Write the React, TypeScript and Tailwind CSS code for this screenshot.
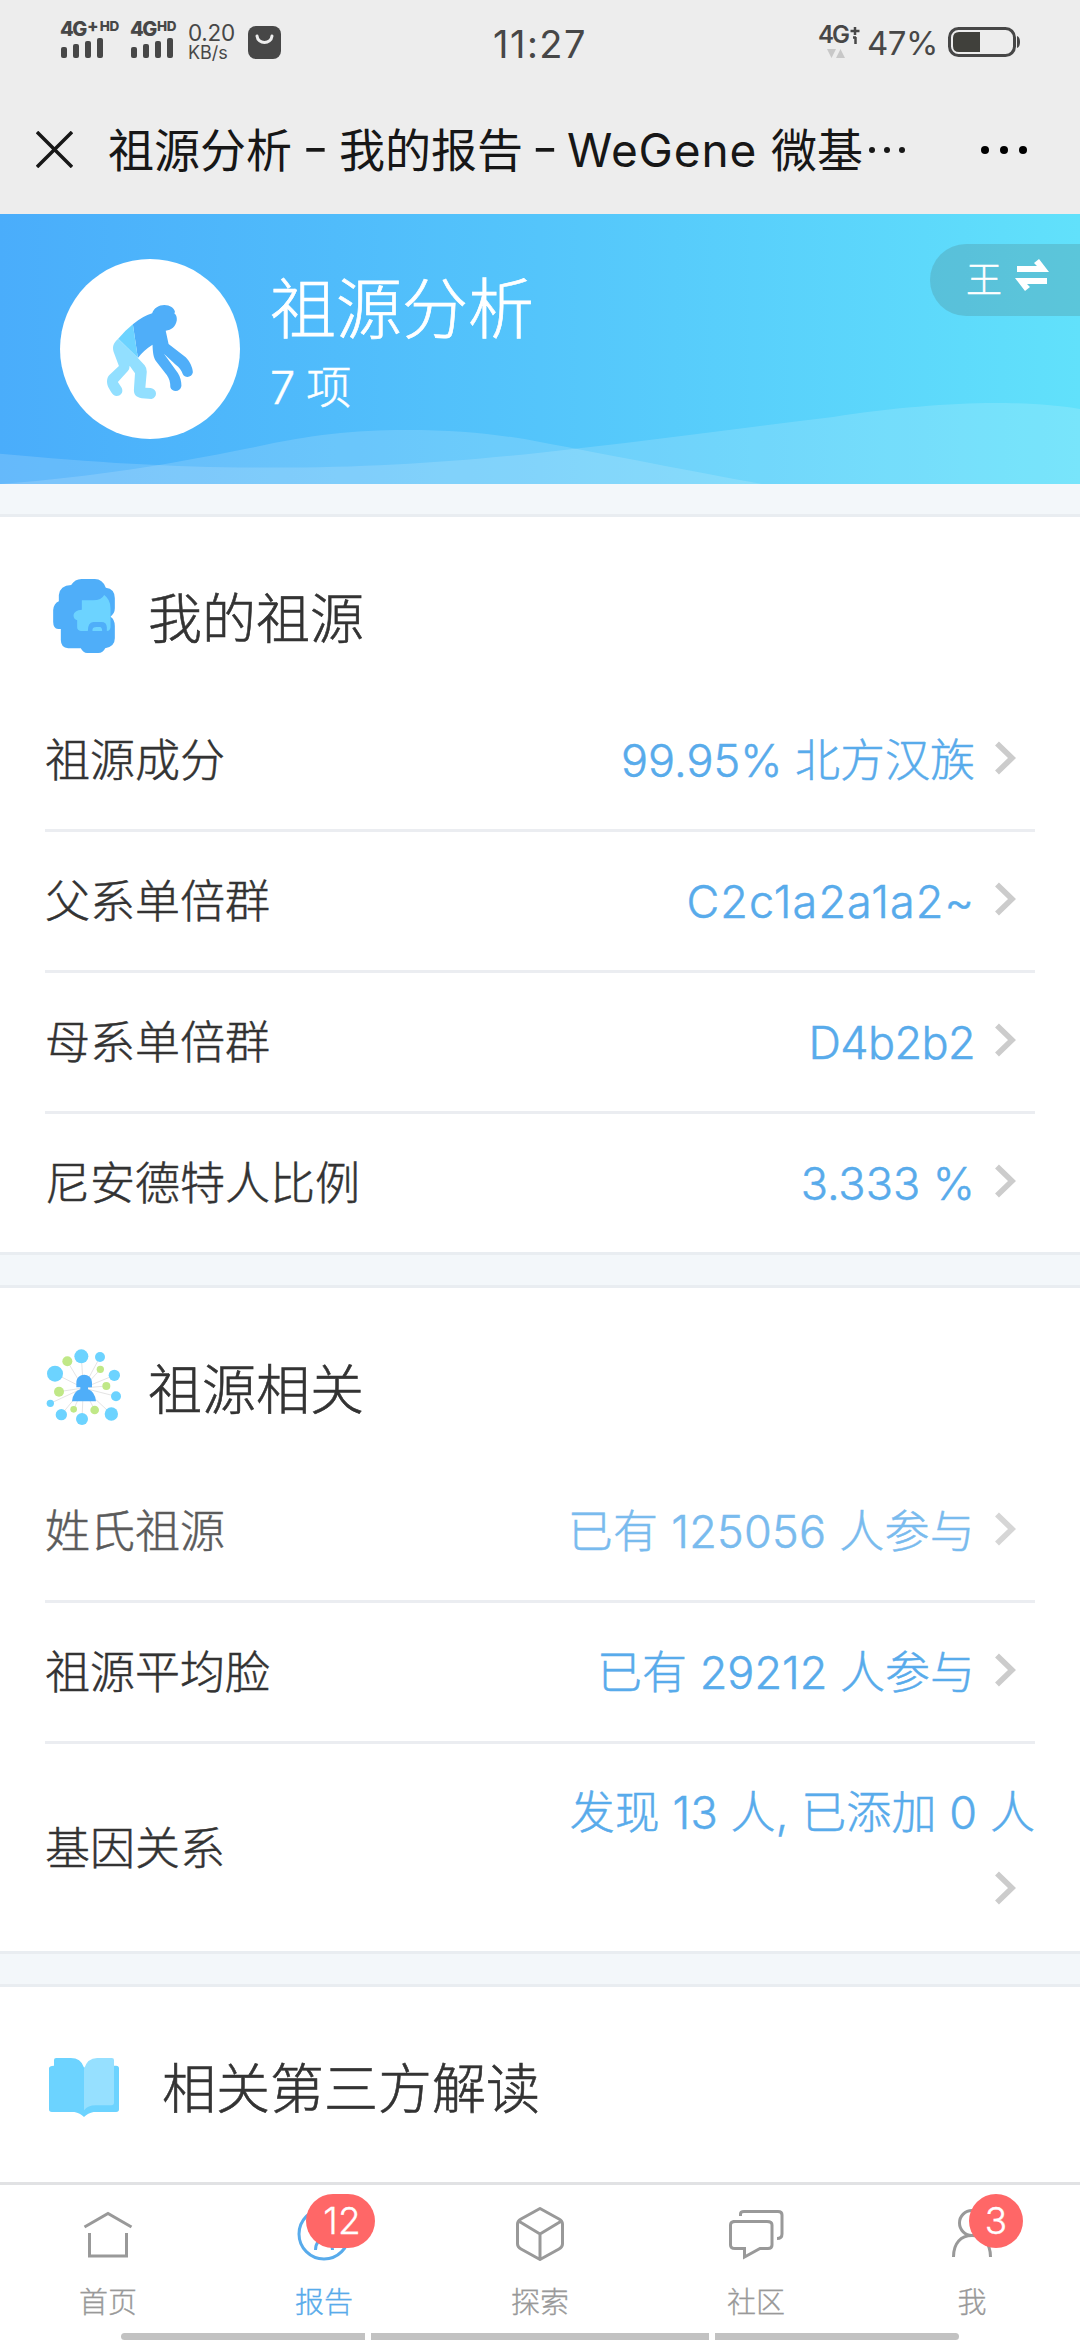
import type { ReactNode } from "react";

function Signal({ label, plus }: { label: string; plus?: boolean }) {
  return (
    <div className="flex h-[36px] flex-col justify-between">
      <div className="flex items-start font-extrabold leading-none">
        <span className="text-[20px] leading-[17px] tracking-[-1.4px]">4G</span>
        {plus && <span className="ml-[1px] text-[17px] leading-[11px]">+</span>}
        <span className="ml-[1px] text-[13.5px] leading-[11px] tracking-[-0.3px]">{label}</span>
      </div>
      <div className="ml-[1px] flex items-end gap-[6px]">
        <i className="h-[11px] w-[6px] rounded-[2px] bg-[#474747]" />
        <i className="h-[14px] w-[6px] rounded-[2px] bg-[#474747]" />
        <i className="h-[17px] w-[6px] rounded-[2px] bg-[#474747]" />
        <i className="h-[20px] w-[6px] rounded-[2px] bg-[#474747]" />
      </div>
    </div>
  );
}

function StatusBar() {
  return (
    <div className="relative flex h-[86px] items-start pl-[60px] pr-[60px] text-[#474747]">
      <div className="mt-[21px] w-[70px]">
        <Signal label="HD" plus />
      </div>
      <div className="mt-[21px] w-[58px]">
        <Signal label="HD" />
      </div>
      <div className="mt-[23px] flex w-[60px] flex-col">
        <span className="text-[22.5px] leading-[20px] tracking-[-0.3px]">0.20</span>
        <span className="text-[18px] leading-[20px]">KB/s</span>
      </div>
      <svg className="mt-[26px]" width="33" height="33" viewBox="0 0 33 33">
        <rect width="33" height="33" rx="8" fill="#474747" />
        <path d="M9 10 C10 18.500 23 18.500 24 10" fill="none" stroke="#ededed" strokeWidth="3" strokeLinecap="round" />
      </svg>
      <span className="absolute left-[493px] top-[24px] text-[38px] leading-[40px] tracking-[1.5px]">11:27</span>
      <div className="ml-auto mt-[26px] flex w-[49px] flex-col">
        <div className="flex items-start font-semibold">
          <span className="text-[24px] leading-[18px] tracking-[-2px]">4G</span>
          <svg className="ml-[2px]" width="10" height="18" viewBox="0 0 10 18">
            <path d="M5 1 V9 M0.500 5 H9.500 M5.500 11 V18 M3 11.500 H6" stroke="#474747" strokeWidth="2.500" fill="none" />
          </svg>
        </div>
        <svg className="ml-[9px] mt-[5px]" width="18" height="9" viewBox="0 0 18 9">
          <path d="M0 0 H9 L4.500 9Z M9 9 L13.500 0 L18 9Z" fill="#c8c8c8" />
        </svg>
      </div>
      <span className="mt-[24px] w-[81px] whitespace-nowrap text-[33px] leading-[38px] tracking-[-0.5px]">47%</span>
      <svg className="mt-[27px]" width="72" height="30" viewBox="0 0 72 30">
        <rect x="1.500" y="1.500" width="65" height="27" rx="9" fill="none" stroke="#474747" strokeWidth="3" />
        <path d="M32 5 V25 H11 Q5 25 5 19 V11 Q5 5 11 5Z" fill="#40403b" />
        <path d="M69 9 Q72 10 72 15 Q72 20 69 21Z" fill="#474747" />
      </svg>
    </div>
  );
}

function TitleBar() {
  return (
    <div className="flex h-[128px] items-center pl-[36px] pr-[53px] text-[#171717]">
      <svg className="mt-[-1px]" width="37" height="37" viewBox="0 0 37 37">
        <path d="M1 1 L36 36 M36 1 L1 36" stroke="#171717" strokeWidth="3.500" />
      </svg>
      <div className="ml-[35px] mt-[-1px] flex items-center whitespace-nowrap text-[46px] leading-[60px]">
        <span>祖源分析</span>
        <span className="mb-[5px] w-[47px] scale-x-125 text-center">-</span>
        <span>我的报告</span>
        <span className="mb-[5px] w-[44px] scale-x-125 text-center">-</span>
        <span className="w-[204px] tracking-[0.9px]">WeGene</span>
        <span>微基</span>
      </div>
      <div className="ml-[6px] flex gap-[9px]">
        <i className="h-[6px] w-[6px] rounded-full bg-[#171717]" />
        <i className="h-[6px] w-[6px] rounded-full bg-[#171717]" />
        <i className="h-[6px] w-[6px] rounded-full bg-[#171717]" />
      </div>
      <div className="ml-auto flex gap-[11px]">
        <i className="h-[8px] w-[8px] rounded-full bg-black" />
        <i className="h-[8px] w-[8px] rounded-full bg-black" />
        <i className="h-[8px] w-[8px] rounded-full bg-black" />
      </div>
    </div>
  );
}

function ApeIcon() {
  return (
    <svg className="overflow-visible" width="100" height="100" viewBox="280 267 280 300" preserveAspectRatio="none">
      <path d="M372 343 Q400 318 426 310 C431 294 445 285 460 285 C476 285 488 294 490 306 L488 310 Q496 316 495 331 C492 351 480 360 464 362 L472 402 L520 442 C532 455 540 475 540 487 C538 503 518 505 512 493 C508 480 502 472 492 464 L459 431 L498 489 C505 501 508 515 508 528 C505 547 482 548 477 532 C477 516 474 506 467 495 L437 454 C429 442 428 425 427 404 C410 415 396 430 386 444 Z" fill="#4faef9" />
      <path d="M331 386 Q350 362 372 343 L386 444 Z" fill="#6cd3ff" />
      <path d="M331 386 L386 444 L405 466 Q411 474 411 485 L407 533 L422 534 C441 537 442 563 424 567 L397 565 C380 562 374 552 375 538 L378 490 L363 467 Q363 477 358 483 L330 516 L341 534 C347 549 335 559 326 558 C316 557 312 548 303 531 C297 514 299 500 310 491 L333 468 L318 425 C314 408 318 398 331 386Z" fill="#92dfff" />
    </svg>
  );
}

function Hero() {
  return (
    <div className="relative h-[270px] bg-gradient-to-r from-[#4aadfb] via-[#54c5fb] to-[#61e1fb]">
      <svg className="absolute inset-0" width="1080" height="270" viewBox="0 0 1080 270">
        <path d="M0 270 C100 262 160 252 250 234 C310 221 350 216 407 216 C460 216 505 221 540 228 C600 239 700 259 762 270Z" fill="#fff" fillOpacity="0.15" />
        <path d="M0 239.700 C100 249 180 253.600 271 253.600 C370 253.600 450 248 540 238.700 C640 228 740 214 833 203 C890 194 950 189 994 189 C1030 189 1055 191 1080 195 V270 H0Z" fill="#fff" fillOpacity="0.15" />
      </svg>
      <div className="relative flex">
        <div className="ml-[60px] mt-[45px] flex h-[180px] w-[180px] items-center justify-center rounded-full bg-white">
          <ApeIcon />
        </div>
        <div className="ml-[30px] mt-[55px] text-white">
          <h1 className="text-[66px] font-light leading-[80px] [-webkit-text-stroke:0.7px]">祖源分析</h1>
          <p className="mt-[9px] text-[45px] font-light leading-[60px] tracking-[-0.8px] [-webkit-text-stroke:0.5px]">7 项</p>
        </div>
        <div className="ml-auto mt-[30px] flex h-[72px] w-[150px] items-start rounded-l-full bg-[#4d7f80]/27 pl-[36px] text-white">
          <span className="mt-[16px] text-[36px] font-light leading-[40px] [-webkit-text-stroke:0.4px]">王</span>
          <svg className="ml-[13px] mt-[15px]" width="34" height="32" viewBox="0 0 34 32">
            <path d="M2 7 H22 L19 4 L24 0 L34 13 H2Z M32 25 H12 L15 28 L10 32 L0 19 H32Z" fill="#fff" />
          </svg>
        </div>
      </div>
    </div>
  );
}

function Chevron() {
  return (
    <svg width="21" height="34" viewBox="0 0 21 34">
      <path d="M2 2.500 L17 17 L2 31.500" fill="none" stroke="#ccc" strokeWidth="5.600" />
    </svg>
  );
}

function CavemanIcon() {
  return (
    <svg width="62" height="74" viewBox="160 117 185 222">
      <path d="M214 135 Q225 117 245 117 H285 Q308 117 318 143 Q345 146 345 175 V205 Q345 220 332 230 Q345 238 345 258 V295 Q345 320 316 325 Q310 339 295 339 H262 Q250 339 243 325 H205 Q183 323 183 300 V267 H175 Q160 265 160 245 V210 Q162 190 177 184 V165 Q180 137 214 135Z" fill="#4faef9" />
      <path d="M246 181 H280 Q305 181 313 165 Q332 178 332 205 V262 Q331 273 321 273 V262 Q320 246 305 246 H280 Q264 248 264 273 H243 Q232 272 232 262 V241 Q221 238 221 225 Q223 211 246 209 Z M278 273 V268 Q280 261 290 261 H300 Q307 262 307 273Z" fill="#6cd3ff" />
    </svg>
  );
}

const blueNodes = [
  [244, 347, 21], [300, 349, 15], [165, 399, 24], [343, 404, 17], [348, 467, 15],
  [151, 488, 11], [184, 522, 17], [246, 535, 18], [334, 520, 20],
];
const greenNodes = [
  [202, 362, 15], [301, 386, 11], [319, 436, 12], [177, 453, 15], [221, 506, 10], [284, 508, 13],
];

function NetworkIcon() {
  return (
    <svg width="78" height="78" viewBox="135 322 234 234">
      {[...blueNodes, ...greenNodes].map(([x, y]) => (
        <line key={`${x}-${y}`} x1={x} y1={y} x2="250" y2="442" stroke="#dedede" strokeWidth="2.500" />
      ))}
      {blueNodes.map(([x, y, r]) => (
        <circle key={`${x}-${y}`} cx={x} cy={y} r={r} fill="#6cd3ff" />
      ))}
      {greenNodes.map(([x, y, r]) => (
        <circle key={`${x}-${y}`} cx={x} cy={y} r={r} fill="#c0e887" />
      ))}
      <path d="M229 440 V426 C229 394 276 394 276 426 V440 H264 V446 Q285 453 288 482 H216 Q219 453 241 446 V440Z" fill="#4faef9" />
    </svg>
  );
}

function BookIcon() {
  return (
    <svg width="70" height="59" viewBox="137 352 196 176" preserveAspectRatio="none">
      <path d="M151 375 V358 Q151 352 157 352 H198 Q226 352 235 380 H319 V375 H325 Q333 375 333 383 V505 Q333 513 325 513 H262 Q246 516 235 528 Q224 516 208 513 H145 Q137 513 137 505 V383 Q137 375 151 375Z" fill="#6cd3ff" />
      <path d="M235 508 V385 Q244 352 272 352 H313 Q319 352 319 358 V485 Q319 493 312 493 H268 Q246 493 235 508Z" fill="#96e0ff" />
    </svg>
  );
}

function Heading({ icon, wide, children }: { icon: ReactNode; wide?: boolean; children: ReactNode }) {
  return (
    <div className="flex h-[174px] items-center pl-[45px] pt-[24px]">
      <div className={wide ? "flex w-[117px] pl-[4px] pt-[2px]" : "flex w-[103px]"}>{icon}</div>
      <h2 className="mt-[7px] text-[54px] font-light leading-[70px] text-[#333] [-webkit-text-stroke:0.6px]">{children}</h2>
    </div>
  );
}

type Item = { label: string; value: string; tracking?: string; pressed?: boolean; tall?: boolean };

function Rows({ items }: { items: Item[] }) {
  return (
    <ul className="px-[45px]">
      {items.map((item, i) => (
        <li key={item.label} className={i < items.length - 1 ? "border-b-[3px] border-[#ebedf1]" : ""}>
          <div
            className={
              "flex items-center justify-between text-[45px] font-light [-webkit-text-stroke:0.5px] " +
              (item.tall ? "h-[207px] " : "h-[138px] ") +
              (item.pressed ? "opacity-80" : "")
            }
          >
            <span className="pt-[2px] text-[#333]">{item.label}</span>
            {item.tall ? (
              <span className="flex flex-col items-end whitespace-nowrap pt-[11px] text-[#58abeb]">
                <span className="leading-[70px] tracking-[0.1px]">{item.value}</span>
                <span className="mr-[19px] flex h-[80px] items-center">
                  <Chevron />
                </span>
              </span>
            ) : (
              <span className="mr-[19px] flex items-center whitespace-nowrap text-[#58abeb]">
                <span className={"pt-[2px] " + (item.tracking ?? "")}>{item.value}</span>
                <span className="mb-[5px] ml-[20px]">
                  <Chevron />
                </span>
              </span>
            )}
          </div>
        </li>
      ))}
    </ul>
  );
}

function Divider() {
  return <div className="h-[36px] border-y-[3px] border-[#e9edf1] bg-[#f3f7fa]" />;
}

function Badge({ children, wide }: { children: ReactNode; wide?: boolean }) {
  return (
    <span
      className={
        "absolute top-[9px] flex h-[54px] items-center justify-center rounded-full bg-[#ff6767] text-[37px] font-light text-white [-webkit-text-stroke:0.3px] " +
        (wide ? "left-[90px] w-[69px] pl-[3px]" : "left-[105px] w-[54px]")
      }
    >
      {children}
    </span>
  );
}

function Tab({ label, active, badge, children }: { label: string; active?: boolean; badge?: ReactNode; children: ReactNode }) {
  return (
    <div className={"relative flex w-[216px] flex-col items-center " + (active ? "text-[#58abeb]" : "text-[#999]")}>
      <svg className="mt-[20px]" width="60" height="60" viewBox="0 0 60 60" fill="none" stroke="currentColor" strokeWidth="3">
        {children}
      </svg>
      {badge}
      <span className="mt-[18px] text-[29px] font-light leading-[40px] [-webkit-text-stroke:0.3px]">{label}</span>
    </div>
  );
}

function TabBar() {
  return (
    <nav className="flex h-[158px] shrink-0 flex-col justify-between border-t-[3px] border-[#e1e2e4] bg-white">
      <div className="flex">
        <Tab label="首页">
          <path d="M6.500 22 L30 8.500 L53.500 22 M11.500 28 V51 H48.500 V28" />
        </Tab>
        <Tab label="报告" active badge={<Badge wide>12</Badge>}>
          <circle cx="30" cy="29" r="25" />
          <path d="M21.500 45 C22 30 37.500 30 38.500 45" />
        </Tab>
        <Tab label="探索">
          <path d="M30 3.500 L49 14 Q52.500 16 52.500 19 V39 Q52.500 42 49 44 L30 54.500 L11 44 Q7.500 42 7.500 39 V19 Q7.500 16 11 14Z M8.500 16 L30 29 L51.500 16 M30 29 V54" strokeLinejoin="round" />
        </Tab>
        <Tab label="社区">
          <path d="M7 16.500 H41 Q46 16.500 46 20 V40 Q46 43.500 42 43.500 H34 L18.500 52 V43.500 H9 Q4.500 43.500 4.500 40 V20 Q4.500 16.500 9 16.500Z M14.500 11 V9 Q14.500 6.500 18 6.500 H52 Q56 6.500 56 10 V29 Q56 33.500 51 33.500" />
        </Tab>
        <Tab label="我" badge={<Badge>3</Badge>}>
          <circle cx="30" cy="18" r="12.500" />
          <path d="M11.500 52 C11.500 38 19 30.500 30 30.500 C41 30.500 48.500 38 48.500 52" />
        </Tab>
      </div>
      <div className="flex h-[7px] gap-[6px] px-[121px]">
        <i className="w-[244px] rounded-l-full bg-[#c2c2c2]" />
        <i className="w-[338px] bg-[#c2c2c2]" />
        <i className="w-[244px] rounded-r-full bg-[#c2c2c2]" />
      </div>
    </nav>
  );
}

export default function App() {
  return (
    <div className="flex h-[2340px] w-[1080px] flex-col overflow-hidden bg-white font-['Inter','Noto_Sans_CJK_SC',sans-serif]">
      <header className="bg-[#ededed]">
        <StatusBar />
        <TitleBar />
      </header>
      <main className="flex-1">
        <Hero />
        <div className="h-[33px] border-b-[3px] border-[#e9edf1] bg-[#f3f7fa]" />
        <section>
          <Heading icon={<span className="pl-[8px]"><CavemanIcon /></span>}>我的祖源</Heading>
          <Rows
            items={[
              { label: "祖源成分", value: "99.95% 北方汉族" },
              { label: "父系单倍群", value: "C2c1a2a1a2~", tracking: "tracking-[1.1px]" },
              { label: "母系单倍群", value: "D4b2b2", tracking: "tracking-[-0.6px]" },
              { label: "尼安德特人比例", value: "3.333 %" },
            ]}
          />
        </section>
        <Divider />
        <section>
          <Heading icon={<NetworkIcon />}>祖源相关</Heading>
          <Rows
            items={[
              { label: "姓氏祖源", value: "已有 125056 人参与", tracking: "tracking-[0.25px]", pressed: true },
              { label: "祖源平均脸", value: "已有 29212 人参与" },
              { label: "基因关系", value: "发现 13 人, 已添加 0 人", tall: true },
            ]}
          />
        </section>
        <Divider />
        <section>
          <Heading icon={<BookIcon />} wide>相关第三方解读</Heading>
        </section>
      </main>
      <TabBar />
    </div>
  );
}
